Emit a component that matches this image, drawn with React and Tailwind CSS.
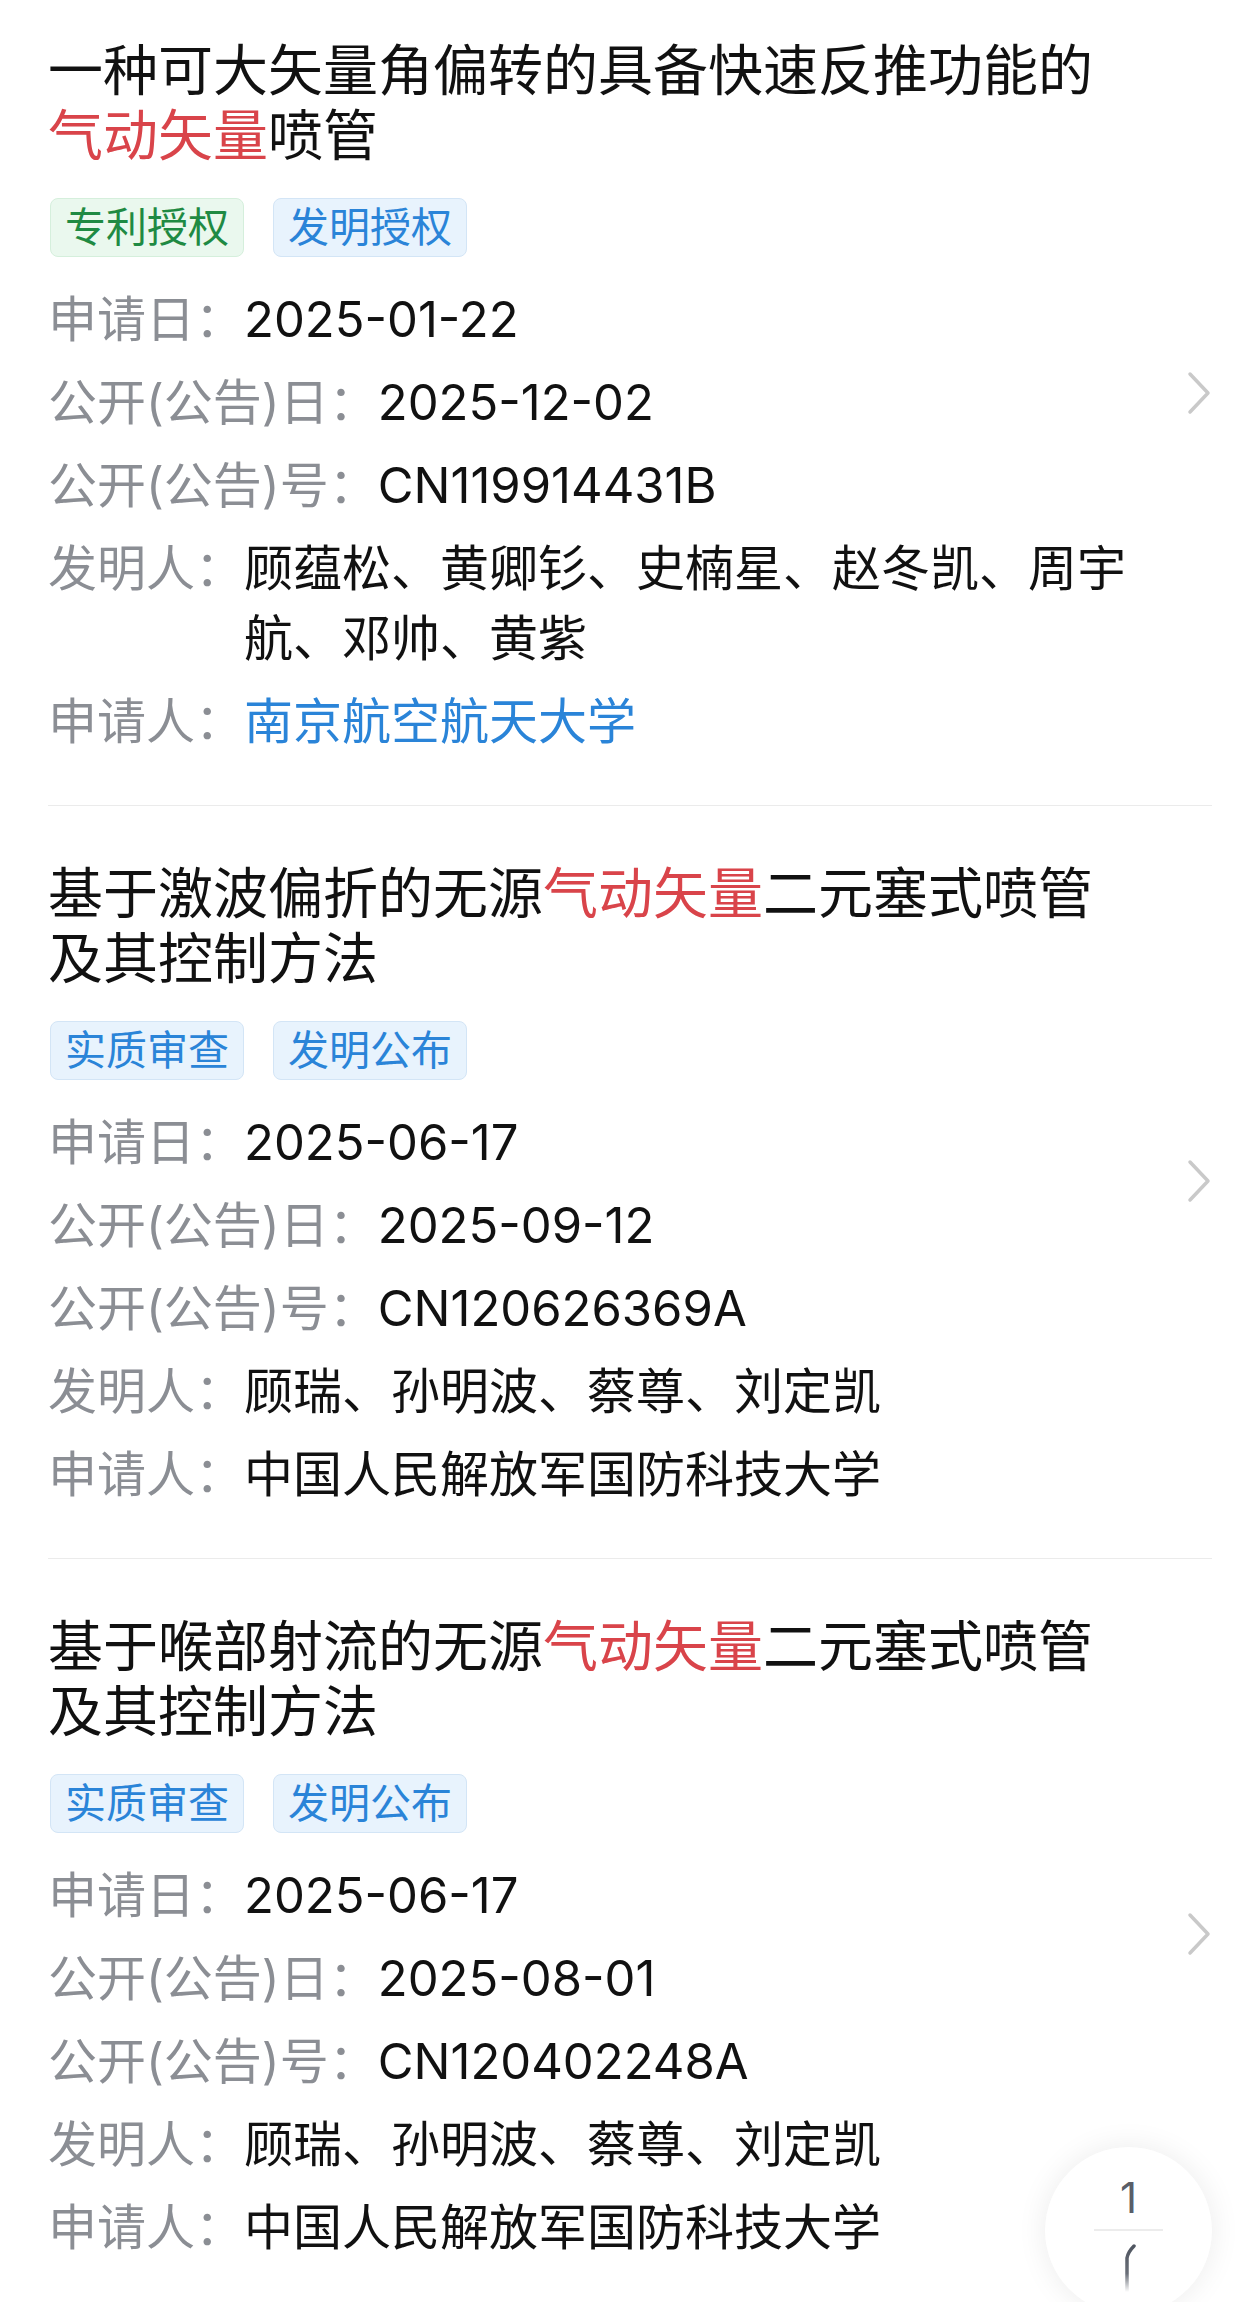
import React from "react";

const patents = [
  {
    id: "p1",
    title: ["一种可大矢量角偏转的具备快速反推功能的", "气动矢量", "喷管"],
    tags: [
      { label: "专利授权", tone: "green" },
      { label: "发明授权", tone: "blue" },
    ],
    applyDate: "2025-01-22",
    pubDate: "2025-12-02",
    pubNo: "CN119914431B",
    inventors: "顾蕴松、黄卿钐、史楠星、赵冬凯、周宇航、邓帅、黄紫",
    applicant: "南京航空航天大学",
    applicantLink: true,
  },
  {
    id: "p2",
    title: ["基于激波偏折的无源", "气动矢量", "二元塞式喷管及其控制方法"],
    tags: [
      { label: "实质审查", tone: "blue" },
      { label: "发明公布", tone: "blue" },
    ],
    applyDate: "2025-06-17",
    pubDate: "2025-09-12",
    pubNo: "CN120626369A",
    inventors: "顾瑞、孙明波、蔡尊、刘定凯",
    applicant: "中国人民解放军国防科技大学",
  },
  {
    id: "p3",
    title: ["基于喉部射流的无源", "气动矢量", "二元塞式喷管及其控制方法"],
    tags: [
      { label: "实质审查", tone: "blue" },
      { label: "发明公布", tone: "blue" },
    ],
    applyDate: "2025-06-17",
    pubDate: "2025-08-01",
    pubNo: "CN120402248A",
    inventors: "顾瑞、孙明波、蔡尊、刘定凯",
    applicant: "中国人民解放军国防科技大学",
  },
];

const fontStack = {
  fontFamily: '"Inter", "Noto Sans CJK SC", sans-serif',
};

const Tag = ({ label, tone }) => (
  <span
    className={`flex h-[59px] items-center rounded-[8px] border px-[14px] text-[41px] leading-none ${
      tone === "green"
        ? "border-[#d5efdc] bg-[#eaf8ee] text-[#1f8a43]"
        : "border-[#d3e5f6] bg-[#e8f3fd] text-[#2a84d8]"
    }`}
  >
    {label}
  </span>
);

const InfoRow = ({ label, children }) => (
  <div className="flex text-[49px] leading-[70px]">
    <span className="shrink-0 text-[#8b8e94]">{label}</span>
    <span className="min-w-0 flex-1">{children}</span>
  </div>
);

const Chevron = () => (
  <svg width="26" height="44" viewBox="0 0 26 44" fill="none" className="mb-[10px]">
    <path
      d="M4 3 L22 22 L4 41"
      stroke="#c9c9c9"
      strokeWidth="3.5"
      strokeLinecap="round"
      strokeLinejoin="round"
    />
  </svg>
);

const PatentCard = ({ patent, first }) => (
  <div
    className={`border-b border-[#ebebeb] pb-[48px] ${first ? "pt-[38px]" : "pt-[55px]"}`}
  >
    <div className="flex items-center">
      <div className="w-[1082px]">
        <h3 className="text-[55px] font-normal leading-[65px] text-[#111]">
          {patent.title[0]}
          <span className="text-[#d9444a]">{patent.title[1]}</span>
          {patent.title[2]}
        </h3>
        <div className="mt-[30px] flex gap-[29px] pl-[2px]">
          {patent.tags.map((tag) => (
            <Tag key={tag.label} label={tag.label} tone={tag.tone} />
          ))}
        </div>
        <div className="mt-[28px] flex flex-col gap-[13px] text-[#111]">
          <InfoRow label="申请日：">{patent.applyDate}</InfoRow>
          <InfoRow label="公开(公告)日：">{patent.pubDate}</InfoRow>
          <InfoRow label="公开(公告)号：">{patent.pubNo}</InfoRow>
          <InfoRow label="发明人：">{patent.inventors}</InfoRow>
          <InfoRow label="申请人：">
            <span className={patent.applicantLink ? "text-[#2a84d8]" : ""}>
              {patent.applicant}
            </span>
          </InfoRow>
        </div>
      </div>
      <div className="flex flex-1 justify-end">
        <Chevron />
      </div>
    </div>
  </div>
);

const PageIndicator = () => (
  <div className="absolute left-[1045px] top-[2147px] flex h-[167px] w-[167px] flex-col items-center rounded-full bg-white shadow-[0_0_30px_rgba(0,0,0,0.08)]">
    <span className="mt-[28px] text-[42px] leading-[46px] text-[#595e68]">1</span>
    <span className="mt-[8px] h-[2px] w-[69px] bg-[#ececec]" />
    <svg width="20" height="50" viewBox="0 0 20 50" className="mt-[13px]">
      <defs>
        <linearGradient id="fade" x1="0" y1="0" x2="0" y2="1">
          <stop offset="0" stopColor="#4f5560" />
          <stop offset="0.6" stopColor="#6a6f78" />
          <stop offset="1" stopColor="#6a6f78" stopOpacity="0" />
        </linearGradient>
      </defs>
      <path
        d="M15 2 Q9 8 8 14 L8 48"
        stroke="url(#fade)"
        strokeWidth="3.5"
        fill="none"
        strokeLinecap="round"
      />
    </svg>
  </div>
);

export default function App() {
  return (
    <div className="relative min-h-[2302px] overflow-hidden bg-white" style={fontStack}>
      <div className="mx-[48px]">
        {patents.map((patent, i) => (
          <PatentCard key={patent.id} patent={patent} first={i === 0} />
        ))}
      </div>
      <PageIndicator />
    </div>
  );
}
